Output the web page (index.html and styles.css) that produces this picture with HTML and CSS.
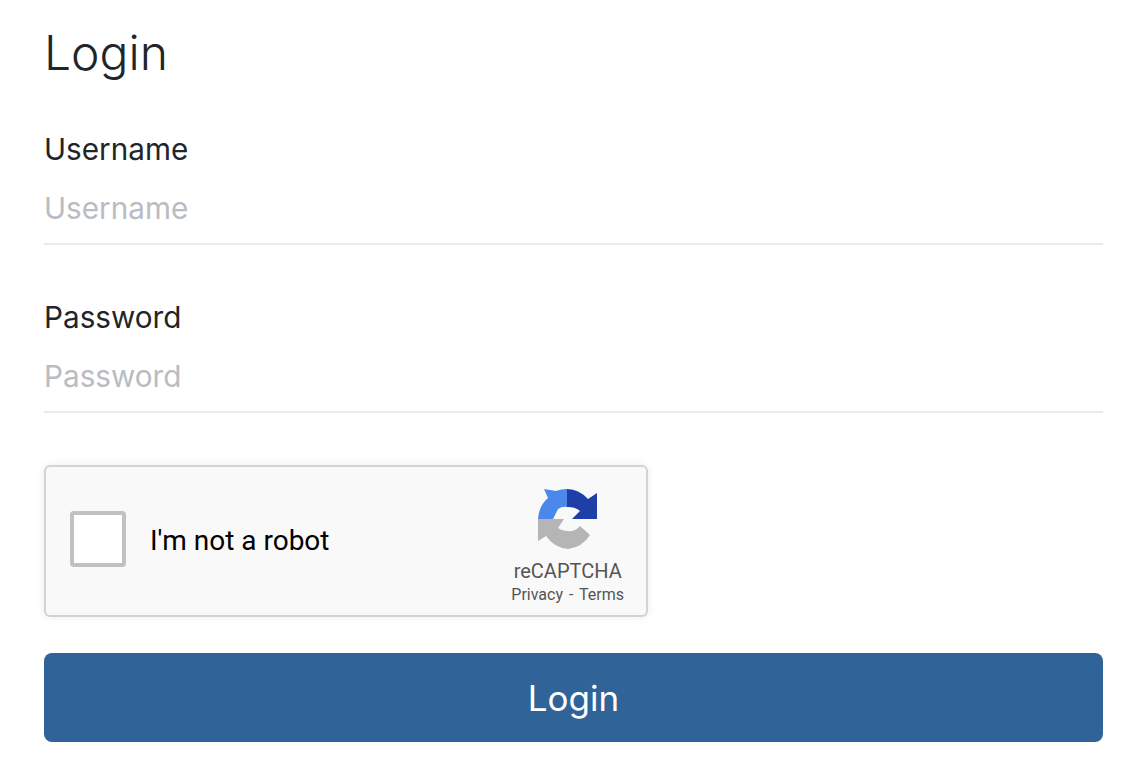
FILE: index.html
```html
<!DOCTYPE html>
<html lang="en">
<head>
    <meta charset="UTF-8">
    <title>Login</title>
    <link rel="stylesheet" href="styles.css">
</head>
<body>
    <h1>Login</h1>
    <form class="login-form">
        <div class="form-group">
            <label for="username">Username</label>
            <input type="text" id="username" placeholder="Username">
        </div>
        <div class="form-group">
            <label for="password">Password</label>
            <input type="password" id="password" placeholder="Password">
        </div>
        <div class="captcha">
            <span class="captcha-box"></span>
            <span class="captcha-label">I'm not a robot</span>
            <div class="captcha-brand">
                <svg class="captcha-logo" viewBox="0 0 60 60" width="60" height="60">
                    <path fill="#b5b5b5" d="M0 30H26L20 39A14 14 0 0 0 30 42A13 13 0 0 0 42 37L52 46A30 30 0 0 1 30 60A30 30 0 0 1 8 47L0 52Z"/>
                    <path fill="#4a88ec" d="M0 30A30 30 0 0 1 10 9L6 0L18 2A30 30 0 0 1 29 0V18A13 13 0 0 0 20 20L15 30Z"/>
                    <path fill="#1f3fa8" d="M29 0A30 30 0 0 1 50 10L59 4V30H34L42 22A17 17 0 0 0 29 18Z"/>
                </svg>
                <span class="captcha-name">reCAPTCHA</span>
                <span class="captcha-links">Privacy - Terms</span>
            </div>
        </div>
        <button type="submit">Login</button>
    </form>
</body>
</html>
```

FILE: styles.css
```css
body {
    font-family: Inter, "Liberation Sans", sans-serif;
    margin: 0;
    padding: 0 25px 0 44px;
    color: #212529;
    background: #fff;
}
h1 {
    font-size: 48px;
    font-weight: 300;
    line-height: 52px;
    margin: 27px 0 50px;
}
.form-group {
    margin-bottom: 52px;
}
label {
    display: block;
    font-size: 29.7px;
    line-height: 40px;
    margin-bottom: 14px;
}
input {
    display: block;
    width: 100%;
    box-sizing: border-box;
    height: 62px;
    padding: 0 0 10px;
    border: none;
    border-bottom: 2px solid #e9ecef;
    outline: none;
    font-family: inherit;
    font-size: 29.7px;
    color: #212529;
}
input::placeholder {
    color: #b9bcc2;
    opacity: 1;
}
.captcha {
    display: flex;
    align-items: center;
    box-sizing: border-box;
    width: 604px;
    height: 152px;
    padding: 0 22px 0 24px;
    background: #f9f9f9;
    border: 2px solid #d3d3d3;
    border-radius: 6px;
    box-shadow: 0 0 8px rgba(0, 0, 0, 0.08);
    font-family: Roboto, sans-serif;
}
.captcha-box {
    box-sizing: border-box;
    width: 56px;
    height: 56px;
    margin-bottom: 4px;
    background: #fff;
    border: 4px solid #c1c1c1;
    border-radius: 4px;
}
.captcha-label {
    margin-left: 24px;
    margin-bottom: 2px;
    font-size: 28px;
    color: #000;
}
.captcha-brand {
    display: flex;
    flex-direction: column;
    align-items: center;
    margin-left: auto;
    padding-top: 12px;
    color: #555;
}
.captcha-logo {
    margin-bottom: 8px;
}
.captcha-name {
    font-size: 20px;
    line-height: 28px;
}
.captcha-links {
    font-size: 16px;
    line-height: 20px;
    word-spacing: 2px;
}
button {
    display: block;
    width: 100%;
    height: 89px;
    margin-top: 36px;
    background-color: #306397;
    color: white;
    border: none;
    border-radius: 8px;
    font-family: inherit;
    font-size: 35px;
    cursor: pointer;
}
```
